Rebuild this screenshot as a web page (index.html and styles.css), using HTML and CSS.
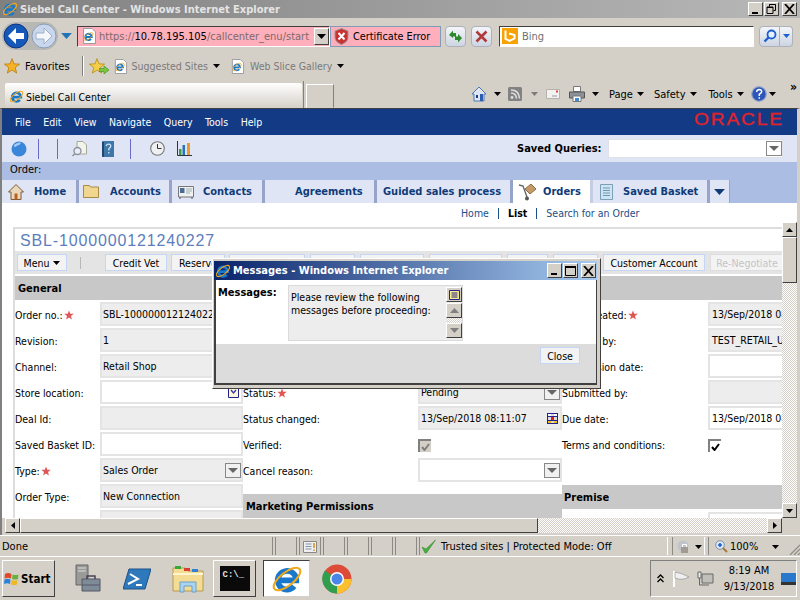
FILE: index.html
```html
<!DOCTYPE html>
<html lang="en">
<head>
    <meta charset="UTF-8">
    <title>Siebel Call Center - Windows Internet Explorer</title>
    <link rel="stylesheet" href="styles.css">
</head>
<body>
    <svg class="sprites" width="0" height="0">
        <symbol id="ie" viewBox="0 0 24 24">
            <path d="M5 13H19A7 7 0 1 0 17.4 17.4" fill="none" stroke="#1a78cc" stroke-width="4.2"/>
            <ellipse cx="12" cy="12" rx="12" ry="5" transform="rotate(-38 12 12)" fill="none" stroke="#f0a81c" stroke-width="1.6"/>
        </symbol>
        <symbol id="doc-ie" viewBox="0 0 16 16">
            <path d="M2.5.5H11L14.5 4V15.5H2.5Z" fill="#fff" stroke="#9a9a9a"/>
            <use href="#ie" x="2" y="3" width="11" height="11"/>
        </symbol>
        <symbol id="star" viewBox="0 0 12 12">
            <path d="M6 .5 7.5 4.4 11.7 4.6 8.4 7.2 9.5 11.3 6 9 2.5 11.3 3.6 7.2.3 4.6 4.5 4.4Z"/>
        </symbol>
        <symbol id="caret" viewBox="0 0 9 5">
            <path d="M0 0H9L4.5 5Z"/>
        </symbol>
    </svg>

    <header class="title-bar">
        <svg class="title-icon"><use href="#ie"/></svg>
        <span class="title-text">Siebel Call Center - Windows Internet Explorer</span>
        <div class="win-btns">
            <span class="win-btn"><svg width="11" height="9" viewBox="0 0 11 9"><path d="M2 7h6v2H2z"/></svg></span>
            <span class="win-btn"><svg width="11" height="10" viewBox="0 0 11 10"><path d="M3.5 2.5V.5h6v6h-2M1 3h6v6.5H1z" fill="none" stroke="#000"/><path d="M1 3h6v1H1zM3.5 0h6v1h-6z"/></svg></span>
            <span class="win-btn win-close"><svg width="11" height="10" viewBox="0 0 11 10"><path d="M1 0l9 10M10 0 1 10" stroke="#000" stroke-width="1.8"/></svg></span>
        </div>
    </header>

    <div class="nav-bar">
        <div class="orbs">
            <svg width="26" height="26" viewBox="0 0 26 26"><circle cx="13" cy="13" r="12" fill="#1558b8" stroke="#0b3480"/><path d="M13 5 5 13l8 8v-5h8v-6h-8z" fill="#fff"/></svg>
            <svg width="26" height="26" viewBox="0 0 26 26"><circle cx="13" cy="13" r="12" fill="#c9d7ec" stroke="#8c9cb5"/><path d="M13 5l8 8-8 8v-5H5v-6h8z" fill="#f4f7fb" stroke="#9fb0c8"/></svg>
        </div>
        <svg class="nav-drop" width="11" height="6"><use href="#caret" fill="#2273b8"/></svg>
        <div class="address">
            <svg class="addr-icon" width="16" height="16"><use href="#doc-ie"/></svg>
            <span class="addr-url">https://<b>10.78.195.105</b>/callcenter_enu/start</span>
            <span class="combo-btn"><svg width="9" height="5"><use href="#caret"/></svg></span>
        </div>
        <div class="cert-error">
            <svg width="15" height="17" viewBox="0 0 15 17"><path d="M7.5.5 14 3v6c0 4-3 6-6.500 7.500C4 15 1 13 1 9V3z" fill="#c73232" stroke="#999"/><path d="M4.5 5l6 6.5M10.5 5l-6 6.5" stroke="#fff" stroke-width="2"/></svg>
            <span>Certificate Error</span>
        </div>
        <span class="ie-btn ie-btn-refresh">
            <svg width="15" height="15" viewBox="0 0 15 15"><path d="M1 6 5 1.5V4h3v3.500H5V9zM14 9l-4 4.500V11H7V7.500h3V5z" fill="#2c8a2c"/></svg>
        </span>
        <span class="ie-btn">
            <svg width="13" height="13" viewBox="0 0 13 13"><path d="M1.5 1.5l10 10M11.5 1.5l-10 10" stroke="#b03a3a" stroke-width="2.6"/></svg>
        </span>
        <div class="search-box">
            <svg width="16" height="16" viewBox="0 0 16 16"><path d="M0 0h16v16H0z" fill="#f7a200"/><path d="M3.5 2.5v8.5l4 2 5-2.500V7L7 5.500" fill="none" stroke="#fff" stroke-width="2"/></svg>
            <span>Bing</span>
        </div>
        <span class="search-go">
            <svg width="14" height="14" viewBox="0 0 14 14"><circle cx="8.5" cy="5.5" r="4" fill="#e6f0ff" stroke="#1c5fd0" stroke-width="1.8"/><path d="M5.5 8.5 1.5 12.5" stroke="#1c5fd0" stroke-width="2.4"/></svg>
        </span>
        <span class="search-drop"><svg width="7" height="4"><use href="#caret" fill="#1c5fd0"/></svg></span>
    </div>

    <div class="fav-bar">
        <svg class="fav-star" width="16" height="16"><use href="#star" fill="#f5b324" stroke="#b97a10" stroke-width=".6"/></svg>
        <span class="fav-label">Favorites</span>
        <span class="fav-sep"></span>
        <span class="fav-add">
            <svg width="16" height="16"><use href="#star" fill="#f5cf4a" stroke="#b98a10" stroke-width=".6"/></svg>
            <svg class="fav-arrow" width="10" height="8" viewBox="0 0 10 8"><path d="M0 2.5h5V0l5 4-5 4V5.500H0z" fill="#7bc840" stroke="#3d8a20" stroke-width=".6"/></svg>
        </span>
        <svg class="fav-doc" width="15" height="15"><use href="#doc-ie"/></svg>
        <span class="fav-link">Suggested Sites</span>
        <svg class="fav-caret" width="7" height="4"><use href="#caret"/></svg>
        <svg class="fav-doc fav-doc-2" width="15" height="15"><use href="#doc-ie"/></svg>
        <span class="fav-link fav-link-2">Web Slice Gallery</span>
        <svg class="fav-caret" width="7" height="4"><use href="#caret"/></svg>
    </div>

    <div class="tab-bar">
        <div class="ie-tab">
            <svg width="15" height="15"><use href="#ie"/></svg>
            <span>Siebel Call Center</span>
        </div>
        <span class="tab-sep"></span>
        <span class="new-tab"></span>
        <div class="cmd-bar">
            <svg class="cmd-home" width="16" height="16" viewBox="0 0 16 16"><path d="M8 1 1 8h2v7h10V8h2z" fill="#dfe6f2" stroke="#4c78b8"/><path d="M5 9h2v3H5z" fill="#1c3c80"/><path d="M9 8h3v7H9z" fill="#2a5db0"/></svg>
            <svg class="cmd-caret" width="7" height="4"><use href="#caret"/></svg>
            <svg class="cmd-rss" width="14" height="14" viewBox="0 0 14 14"><path d="M0 1.5Q0 0 1.5 0h11Q14 0 14 1.5v11q0 1.5-1.5 1.5h-11Q0 14 0 12.5z" fill="#828282"/><circle cx="4" cy="10.5" r="1.4" fill="#ddd"/><path d="M3 6q5 0 5.5 5.5M3 3q8 0 8.500 8.500" fill="none" stroke="#ddd" stroke-width="1.6"/></svg>
            <svg class="cmd-caret cmd-off" width="7" height="4"><use href="#caret"/></svg>
            <svg class="cmd-mail" width="14" height="10" viewBox="0 0 14 10"><path d="M.5.5h13v9H.5z" fill="#f2f2f2" stroke="#b5b2aa"/><path d="M6 7h5" stroke="#999"/><path d="M10 1.5h2v2h-2z" fill="#e04040"/></svg>
            <svg class="cmd-print" width="16" height="16" viewBox="0 0 16 16"><path d="M4.5.5h7v5h-7z" fill="#fff" stroke="#777"/><path d="M.5 6h15v6H.5z" fill="#8b9198" stroke="#555"/><path d="M4 10h8v5.500H4z" fill="#fff" stroke="#777"/><path d="M6 12h4v3H6z" fill="#3d8ad6"/></svg>
            <svg class="cmd-caret" width="7" height="4"><use href="#caret"/></svg>
            <span class="cmd-label cmd-page">Page</span>
            <svg class="cmd-caret cmd-near" width="7" height="4"><use href="#caret"/></svg>
            <span class="cmd-label">Safety</span>
            <svg class="cmd-caret cmd-near" width="7" height="4"><use href="#caret"/></svg>
            <span class="cmd-label cmd-tools">Tools</span>
            <svg class="cmd-caret cmd-near" width="7" height="4"><use href="#caret"/></svg>
            <svg class="cmd-help" width="16" height="16" viewBox="0 0 16 16"><circle cx="8" cy="8" r="7.3" fill="#2b55b8" stroke="#9aa8c8" stroke-width="1.2"/><path d="M5.5 6Q6 3.5 8.2 3.5 11 3.8 10.6 6 10 7.500 8.300 8.300V10M8.300 11.300v1.500" fill="none" stroke="#fff" stroke-width="1.5"/></svg>
            <svg class="cmd-caret cmd-tight" width="7" height="4"><use href="#caret"/></svg>
            <span class="cmd-more">&raquo;</span>
        </div>
    </div>

    <main class="app">
        <nav class="app-menu">
            <span>File</span><span>Edit</span><span>View</span><span>Navigate</span><span>Query</span><span>Tools</span><span>Help</span>
            <span class="oracle">ORACLE</span>
        </nav>

        <div class="app-tools">
            <svg class="tool-globe" width="16" height="16" viewBox="0 0 16 16"><circle cx="8" cy="8" r="7.5" fill="#3a86d8"/><path d="M3 4q3-3 7-2.500-1 3-4 3-1 2-3 1z" fill="#a9d0f5"/></svg>
            <span class="tool-sep tool-sep-1"></span>
            <span class="tool-sep tool-sep-2"></span>
            <svg class="tool-find" width="15" height="16" viewBox="0 0 15 16"><path d="M5 .5h6l3.500 3.500v9H5z" fill="#f3f3ec" stroke="#a5a99a"/><circle cx="5.5" cy="10" r="3.5" fill="#e8eef5" stroke="#8a8f9a" stroke-width="1.3"/><path d="M3 12.5.5 15" stroke="#8a8f9a" stroke-width="1.5"/></svg>
            <svg class="tool-book" width="12" height="16" viewBox="0 0 12 16"><path d="M0 1q0-1 1-1h11v16H1q-1 0-1-1z" fill="#3f78a8"/><path d="M0 1h2v15H1q-1 0-1-1z" fill="#20486c"/><path d="M4 5Q5 3 7 3.200 9.500 3.800 8.500 6L6.800 8v1.500M6.800 11v1.500" fill="none" stroke="#cfe5f5" stroke-width="1.3"/></svg>
            <span class="tool-sep tool-sep-3"></span>
            <svg class="tool-clock" width="15" height="15" viewBox="0 0 15 15"><circle cx="7.5" cy="7.5" r="6.8" fill="#eef0f2" stroke="#777" stroke-width="1.1"/><path d="M7.5 3v4.500H11.500" fill="none" stroke="#333"/></svg>
            <svg class="tool-chart" width="15" height="15" viewBox="0 0 15 15"><path d="M2 8h2.500v6H2z" fill="#3aa03a"/><path d="M5.500 4H8v10H5.500z" fill="#2a70c0"/><path d="M10 2h3v12h-3z" fill="#e89a2c"/><path d="M.5 0v14.500H15" fill="none" stroke="#333"/></svg>
            <label class="saved-label">Saved Queries:</label>
            <span class="saved-select"><span class="drop-btn"></span></span>
        </div>

        <div class="app-order">Order:</div>

        <div class="app-tabs">
            <span class="tab tab-home">
                <svg width="16" height="16" viewBox="0 0 16 16"><path d="M8 .5 .5 8H3v7.500h10V8h2.500z" fill="#e8d8bc" stroke="#7c5a3a"/><path d="M6.500 9.500h3v6h-3z" fill="#c0601e"/></svg>
                Home
            </span>
            <span class="tab tab-accounts">
                <svg width="16" height="13" viewBox="0 0 16 13"><path d="M.5 2V.5h6l1 1.500h8v10.500H.5z" fill="#f0d68e" stroke="#a88a48"/></svg>
                Accounts
            </span>
            <span class="tab tab-contacts">
                <svg width="16" height="14" viewBox="0 0 16 14"><path d="M.5 1.500h15v10.500H.5z" fill="#eef2f2" stroke="#777"/><path d="M2 3h4.500v5H2z" fill="#4a6a90"/><path d="M8 4h6M8 6h6M8 8h4" stroke="#a0b0b0"/><path d="M1 13h2M13 13h2" stroke="#555"/></svg>
                Contacts
            </span>
            <span class="tab tab-agreements">Agreements</span>
            <span class="tab tab-guided">Guided sales process</span>
            <span class="tab tab-orders">
                <svg width="18" height="18" viewBox="0 0 18 18"><path d="M7 6l6-5 5 5-6 5z" fill="#c69a68" stroke="#8c6a44"/><path d="M1 2l4 1 4 11" fill="none" stroke="#666" stroke-width="1.4"/><circle cx="9" cy="15.5" r="2" fill="#555"/></svg>
                Orders
            </span>
            <span class="tab tab-basket">
                <svg width="13" height="16" viewBox="0 0 13 16"><path d="M.5.5h12v15H.5z" fill="#cfe4f0" stroke="#7aa0b8"/><path d="M3 4h7M3 6.500h7M3 9h7M3 11.500h7" stroke="#6a98b8"/></svg>
                Saved Basket
            </span>
            <span class="tab tab-more"><svg width="11" height="6"><use href="#caret" fill="#0f3b78"/></svg></span>
        </div>

        <div class="subnav">
            <a>Home</a><i></i><a class="subnav-on">List</a><i></i><a>Search for an Order</a>
        </div>

        <div class="frame">
            <div class="view">
                <section class="applet">
                    <h2 class="applet-title">SBL-1000000121240227</h2>
                    <div class="btn-bar">
                        <span class="btn btn-menu">Menu <svg width="7" height="4"><use href="#caret"/></svg></span>
                        <span class="btn-sep"></span>
                        <span class="btn btn-credit">Credit Vet</span>
                        <span class="btn btn-reserve">Reserve</span>
                        <span class="btn btn-b3"></span>
                        <span class="btn btn-b4"></span>
                        <span class="btn btn-b5"></span>
                        <span class="btn btn-b6"></span>
                        <span class="btn btn-b7"></span>
                        <span class="btn btn-b8"></span>
                        <span class="btn btn-customer">Customer Account</span>
                        <span class="btn btn-off">Re-Negotiate</span>
                    </div>
                    <h3 class="section-head section-general">General</h3>
                    <div class="form">
                        <div class="col col-1">
                            <div class="row"><label>Order no.:<svg class="req"><use href="#star"/></svg></label><span class="field ro">SBL-1000000121240227</span></div>
                            <div class="row"><label>Revision:</label><span class="field ro">1</span></div>
                            <div class="row"><label>Channel:</label><span class="field ro">Retail Shop</span></div>
                            <div class="row"><label>Store location:</label><span class="field"><svg class="pick" width="11" height="11" viewBox="0 0 11 11"><path d="M.5.5h10v10H.5z" fill="#fff8d8" stroke="#24248c"/><path d="M3 3l2.500 3L8 3" fill="none" stroke="#3a3ab0" stroke-width="1.4"/></svg></span></div>
                            <div class="row"><label>Deal Id:</label><span class="field ro"></span></div>
                            <div class="row"><label>Saved Basket ID:</label><span class="field"></span></div>
                            <div class="row"><label>Type:<svg class="req"><use href="#star"/></svg></label><span class="field ro">Sales Order<span class="drop-btn"></span></span></div>
                            <div class="row"><label>Order Type:</label><span class="field ro">New Connection</span></div>
                            <div class="row"><label></label><span class="field ro"></span></div>
                        </div>
                        <div class="col col-2">
                            <div class="row"></div>
                            <div class="row"></div>
                            <div class="row"></div>
                            <div class="row"><label>Status:<svg class="req"><use href="#star"/></svg></label><span class="field ro">Pending<span class="drop-btn"></span></span></div>
                            <div class="row"><label>Status changed:</label><span class="field ro">13/Sep/2018 08:11:07<svg class="pick" width="11" height="11" viewBox="0 0 11 11"><path d="M0 0h11v11H0z" fill="#24248c"/><path d="M1 1h3v2H1zM7 1h3v2H7z" fill="#fff"/><path d="M4 4h3v3H4z" fill="#e02020"/><path d="M1 8h3v2H1zM7 8h3v2H7z" fill="#f0c020"/><path d="M1 4h3v3H1zM7 4h3v3H7zM4 8h3v2H4zM4 1h3v2H4z" fill="#ddd"/></svg></span></div>
                            <div class="row"><label>Verified:</label><span class="check check-off"><svg width="9" height="8" viewBox="0 0 9 8"><path d="M1 4l2.500 3L8 1" fill="none" stroke="#808080" stroke-width="2"/></svg></span></div>
                            <div class="row"><label>Cancel reason:</label><span class="field"><span class="drop-btn"></span></span></div>
                            <h3 class="section-head section-marketing">Marketing Permissions</h3>
                        </div>
                        <div class="col col-3">
                            <div class="row"><label>Date created:<svg class="req"><use href="#star"/></svg></label><span class="field ro">13/Sep/2018 08:11:07</span></div>
                            <div class="row"><label>Created by:</label><span class="field ro">TEST_RETAIL_USER</span></div>
                            <div class="row"><label>Submission date:</label><span class="field"></span></div>
                            <div class="row"><label>Submitted by:</label><span class="field ro"></span></div>
                            <div class="row"><label>Due date:</label><span class="field">13/Sep/2018 08:11:07</span></div>
                            <div class="row"><label>Terms and conditions:</label><span class="check"><svg width="9" height="8" viewBox="0 0 9 8"><path d="M1 4l2.500 3L8 1" fill="none" stroke="#000" stroke-width="2"/></svg></span></div>
                            <div class="row"></div>
                            <h3 class="section-head section-premise">Premise</h3>
                            <div class="row"><label></label><span class="field"></span></div>
                        </div>
                    </div>
                </section>
            </div>
            <div class="vscroll">
                <span class="sb-btn"><svg width="7" height="4" class="flip"><use href="#caret"/></svg></span>
                <span class="sb-thumb"></span>
                <span class="sb-track"></span>
                <span class="sb-btn"><svg width="7" height="4"><use href="#caret"/></svg></span>
            </div>
            <div class="hscroll">
                <span class="sb-btn"><svg width="4" height="7" viewBox="0 0 4 7"><path d="M4 0V7L0 3.500Z"/></svg></span>
                <span class="sb-thumb sb-thumb-h"></span>
                <span class="sb-track"></span>
                <span class="sb-btn"><svg width="4" height="7" viewBox="0 0 4 7"><path d="M0 0V7L4 3.500Z"/></svg></span>
            </div>
        </div>

        <div class="dialog">
            <div class="dialog-title">
                <svg width="16" height="16"><use href="#ie"/></svg>
                <span>Messages - Windows Internet Explorer</span>
                <div class="win-btns">
                    <span class="win-btn"><svg width="11" height="9" viewBox="0 0 11 9"><path d="M2 7h6v2H2z"/></svg></span>
                    <span class="win-btn"><svg width="11" height="10" viewBox="0 0 11 10"><path d="M.5 1h10v8.500H.5z" fill="none" stroke="#000"/><path d="M0 0h11v2H0z"/></svg></span>
                    <span class="win-btn win-close"><svg width="11" height="10" viewBox="0 0 11 10"><path d="M1 0l9 10M10 0 1 10" stroke="#000" stroke-width="1.8"/></svg></span>
                </div>
            </div>
            <div class="dialog-body">
                <strong>Messages:</strong>
                <div class="msg-box">
                    <p>Please review the following messages before proceeding:</p>
                    <div class="msg-scroll">
                        <span class="msg-btn msg-menu"><svg width="11" height="10" viewBox="0 0 11 10"><path d="M.5.5h10v9H.5z" fill="#f7e98c" stroke="#24248c"/><path d="M2.500 3h6M2.500 5h6M2.500 7h6" stroke="#24248c"/></svg></span>
                        <span class="msg-btn"><svg width="9" height="5" class="flip"><use href="#caret" fill="#808080"/></svg></span>
                        <span class="msg-gap"></span>
                        <span class="msg-btn msg-down"><svg width="9" height="5"><use href="#caret" fill="#808080"/></svg></span>
                    </div>
                </div>
            </div>
            <div class="dialog-foot">
                <span class="btn btn-close">Close</span>
            </div>
        </div>
    </main>

    <footer class="status-bar">
        <span class="st st-done">Done</span>
        <span class="st st-s"></span>
        <span class="st st-note"><svg width="14" height="12" viewBox="0 0 14 12"><path d="M.5.5h13v11H.5z" fill="#f0f0f0" stroke="#888"/><path d="M2.500 3h6M2.500 5.500h6M2.500 8h6" stroke="#8090a8"/><path d="M11 2v5M11 8.500v1.500" stroke="#e08a10" stroke-width="1.5"/></svg></span>
        <span class="st st-s"></span>
        <span class="st st-s"></span>
        <span class="st st-s"></span>
        <span class="st st-s"></span>
        <span class="st st-zone"><svg width="15" height="15" viewBox="0 0 15 15"><path d="M1 8l3 6h1.500L14.500 1 5 10z" fill="#48b040" stroke="#2c8028" stroke-width=".5"/></svg>Trusted sites | Protected Mode: Off</span>
        <span class="st st-lock"><svg width="15" height="14" viewBox="0 0 15 14"><circle cx="8" cy="6" r="5.500" fill="#c0c4ca"/><path d="M6 7h7v6H6z" fill="#a09c92"/><path d="M7.500 7V4.500h4V7" fill="none" stroke="#fff"/></svg><svg width="7" height="4"><use href="#caret"/></svg></span>
        <span class="st st-zoom"><svg width="13" height="13" viewBox="0 0 13 13"><circle cx="5" cy="5" r="4.300" fill="#dce8f8" stroke="#8090a8"/><path d="M3 5h4M5 3v4" stroke="#1c5fd0" stroke-width="1.6"/><path d="M8 8l4 4" stroke="#a8783c" stroke-width="2"/></svg>100%<svg class="zoom-caret" width="7" height="4"><use href="#caret"/></svg><svg class="grip" width="11" height="11" viewBox="0 0 11 11"><path d="M11 1 1 11M11 5 5 11M11 9 9 11" stroke="#8c8a84" stroke-width="1.2"/></svg></span>
    </footer>

    <div class="taskbar">
        <span class="start">
            <svg width="16" height="14" viewBox="0 0 16 14"><path d="M1 2q3-2 6.500 0L7 6.500Q4 5 .5 6.500z" fill="#e0482c"/><path d="M8.500 2.500q3 1 6 0L14 7q-3 1-6 0z" fill="#6cb03c"/><path d="M.5 7.500q3-1.500 6 0L6 12q-3-1.500-6 0z" fill="#2c80d8"/><path d="M7.500 8q3 1 6 0L13 12.500q-3 1-6 0z" fill="#f0b820"/></svg>
            <b>Start</b>
        </span>
        <svg class="tb-server" width="28" height="30" viewBox="0 0 28 30"><path d="M2 1h12v20H2z" fill="#9a9a98" stroke="#666"/><path d="M4 4h8M4 7h8" stroke="#ddd"/><path d="M8 15h18v12H8z" fill="#7e8c98" stroke="#556"/><path d="M13 15v-3h8v3" fill="none" stroke="#445" stroke-width="1.5"/><path d="M8 21h18" stroke="#556"/></svg>
        <svg class="tb-ps" width="28" height="24" viewBox="0 0 28 24"><path d="M6 2h22l-6 20H0z" fill="#2e78bc" stroke="#1a5288"/><path d="M7 7l8 5-10 5M13 18h6" fill="none" stroke="#fff" stroke-width="2"/></svg>
        <svg class="tb-folder" width="32" height="30" viewBox="0 0 32 30"><path d="M1 4h12l3 3h15v20H1z" fill="#f4dc94" stroke="#b89a50"/><path d="M3 2h6v3H3z" fill="#3aa83a"/><path d="M12 4h6v3h-6z" fill="#d84030"/><path d="M20 5h6v3h-6z" fill="#3080d8"/><path d="M1 10h30" stroke="#fff6d0" stroke-width="2"/><path d="M8 28V18h16v10h-4v-6h-8v6z" fill="#a8d4f0" stroke="#6aa0c8"/></svg>
        <span class="tb-cmd"><span class="cmd-screen">C:\_</span></span>
        <span class="tb-ie"><svg width="32" height="32"><use href="#ie"/></svg></span>
        <svg class="tb-chrome" width="30" height="30" viewBox="0 0 30 30"><circle cx="15" cy="15" r="14.5" fill="#dd4b39"/><path d="M15 15 2.500 22.300A14.500 14.500 0 0 0 15 29.500z" fill="#2e9e4f"/><path d="M2.500 22.300A14.500 14.500 0 0 1 3 6.500L15 15z" fill="#2e9e4f"/><path d="M15 15h14.500A14.500 14.500 0 0 1 15 29.500z" fill="#fbc02d"/><circle cx="15" cy="15" r="7" fill="#fff"/><circle cx="15" cy="15" r="5.5" fill="#4a86e8"/></svg>
        <div class="tray">
            <svg class="tray-up" width="7" height="9" viewBox="0 0 7 9"><path d="M.5 4l3-3 3 3M.5 8l3-3 3 3" fill="none" stroke="#000" stroke-width="1.3"/></svg>
            <svg class="tray-flag" width="17" height="16" viewBox="0 0 17 16"><path d="M1 0v16" stroke="#fff" stroke-width="2"/><path d="M2 1q7 1 14 5-7 4-14 1z" fill="#efefef" stroke="#888" stroke-width=".6"/></svg>
            <svg class="tray-net" width="17" height="16" viewBox="0 0 17 16"><path d="M5 3h11v9H5z" fill="#c0bfb8" stroke="#666"/><path d="M1 1h3v6H1z" fill="#eee" stroke="#666"/><path d="M2.500 7v7H12" fill="none" stroke="#666"/></svg>
            <span class="clock">8:19 AM<br>9/13/2018</span>
            <svg class="tray-desk" width="15" height="12" viewBox="0 0 15 12"><path d="M0 0h15v12H0z" fill="#2a78cc"/><path d="M0 9h15v3H0z" fill="#333"/></svg>
        </div>
    </div>
</body>
</html>
```

FILE: styles.css
```css
* {
    box-sizing: border-box;
}

html, body {
    margin: 0;
    width: 800px;
    height: 600px;
    overflow: hidden;
}

body {
    display: flex;
    flex-direction: column;
    background-color: #d4d0c8;
    color: #000;
    font-family: "DejaVu Sans", sans-serif;
    font-stretch: condensed;
    font-size: 10.5px;
}

svg {
    flex: none;
    display: block;
}

.sprites {
    position: absolute;
}

.flip {
    transform: rotate(180deg);
}

/* window title */
.title-bar {
    height: 18px;
    display: flex;
    align-items: center;
    padding: 0 3px 0 2px;
    background: linear-gradient(to right, #808080, #b8b8b8);
}

.title-icon {
    width: 16px;
    height: 16px;
}

.title-text {
    margin-left: 2px;
    color: #e4e4e4;
    font-size: 11px;
    font-weight: bold;
}

.win-btns {
    margin-left: auto;
    display: flex;
}

.win-btn {
    width: 15px;
    height: 14px;
    margin-left: 1px;
    display: flex;
    align-items: center;
    justify-content: center;
    background-color: #d4d0c8;
    border: 1px solid;
    border-color: #fff #404040 #404040 #fff;
}

.win-close {
    margin-left: 3px;
}

/* address row */
.nav-bar {
    height: 36px;
    display: flex;
    align-items: center;
    padding-left: 2px;
}

.orbs {
    width: 56px;
    height: 28px;
    display: flex;
    align-items: center;
    padding-left: 1px;
    gap: 2px;
    background-color: #b8b8b4;
    border-radius: 14px;
}

.nav-drop {
    margin-left: 3px;
}

.address {
    width: 253px;
    height: 21px;
    margin-left: 5px;
    display: flex;
    align-items: center;
    padding-left: 3px;
    background-color: #ffafbc;
    border: 1px solid;
    border-color: #404040 #fff #fff #404040;
}

.addr-url {
    margin-left: 2px;
    color: #7c6a6a;
    font-size: 11px;
    white-space: nowrap;
}

.addr-url b {
    color: #000;
    font-weight: normal;
}

.combo-btn {
    width: 15px;
    height: 17px;
    margin-left: auto;
    display: flex;
    align-items: center;
    justify-content: center;
    background-color: #d4d0c8;
    border: 1px solid;
    border-color: #fff #404040 #404040 #fff;
}

.cert-error {
    width: 111px;
    height: 21px;
    display: flex;
    align-items: center;
    gap: 4px;
    padding-left: 3px;
    background-color: #ffafbc;
    border: 1px solid #7f9db9;
    font-size: 10.8px;
}

.ie-btn {
    width: 21px;
    height: 21px;
    margin-left: 5px;
    display: flex;
    align-items: center;
    justify-content: center;
    background: linear-gradient(#f3f5f9, #cdd5e2);
    border: 1px solid #aeb2b8;
    border-radius: 4px;
}

.ie-btn-refresh {
    margin-left: 4px;
}

.search-box {
    width: 255px;
    height: 21px;
    margin-left: 7px;
    display: flex;
    align-items: center;
    gap: 4px;
    padding-left: 2px;
    background-color: #fff;
    border: 1px solid;
    border-color: #404040 #fff #fff #404040;
    color: #707070;
    font-size: 11px;
}

.search-go {
    width: 21px;
    height: 21px;
    margin-left: 5px;
    display: flex;
    align-items: center;
    justify-content: center;
    background: linear-gradient(#f3f5f9, #cdd5e2);
    border: 1px solid #aeb2b8;
    border-radius: 4px 0 0 4px;
}

.search-drop {
    width: 13px;
    height: 21px;
    display: flex;
    align-items: center;
    justify-content: center;
    background: linear-gradient(#f3f5f9, #cdd5e2);
    border: 1px solid #aeb2b8;
    border-left: none;
    border-radius: 0 4px 4px 0;
}

/* favorites row */
.fav-bar {
    height: 26px;
    display: flex;
    align-items: center;
    padding: 0 0 2px 4px;
    font-size: 11px;
}

.fav-label {
    margin-left: 5px;
}

.fav-sep {
    width: 2px;
    height: 20px;
    margin-left: 12px;
    border-left: 1px solid #808080;
    border-right: 1px solid #fff;
}

.fav-add {
    width: 18px;
    height: 16px;
    margin-left: 5px;
    position: relative;
}

.fav-arrow {
    position: absolute;
    right: -2px;
    bottom: 0;
}

.fav-doc {
    margin-left: 6px;
}

.fav-doc-2 {
    margin-left: 10px;
}

.fav-link {
    margin-left: 4px;
    color: #7a7a7a;
    font-size: 10.5px;
}

.fav-link-2 {
    margin-left: 5px;
}

.fav-caret {
    margin-left: 5px;
}

/* tab row */
.tab-bar {
    height: 28px;
    display: flex;
    align-items: flex-end;
    padding-left: 5px;
    font-size: 11px;
}

.ie-tab {
    width: 297px;
    height: 25px;
    display: flex;
    align-items: center;
    gap: 2px;
    padding: 2px 0 0 4px;
    background: linear-gradient(#fff, #d4d0c8);
    border-radius: 2px 2px 0 0;
    font-size: 10.5px;
}

.tab-sep {
    width: 1px;
    height: 27px;
    margin-left: 1px;
    background-color: #808080;
}

.new-tab {
    width: 28px;
    height: 24px;
    margin-left: 2px;
    border: 1px solid;
    border-color: #fff #808080 #d4d0c8 #fff;
}

.cmd-bar {
    flex: 1;
    height: 28px;
    display: flex;
    align-items: center;
    padding-left: 137px;
    position: relative;
}

.cmd-caret {
    margin-left: 7px;
}

.cmd-off {
    opacity: 0.4;
    margin-left: 9px;
}

.cmd-near {
    margin-left: 4px;
}

.cmd-rss {
    margin-left: 7px;
}

.cmd-mail {
    margin-left: 8px;
}

.cmd-print {
    margin-left: 9px;
}

.cmd-label {
    margin-left: 10px;
    font-size: 11px;
}

.cmd-tools {
    margin-left: 12px;
}

.cmd-help {
    margin-left: 7px;
}

.cmd-tight {
    margin-left: 2px;
}

.cmd-more {
    position: absolute;
    right: 3px;
    top: 0;
    font-size: 12px;
    font-weight: bold;
}

/* siebel app */
.app {
    height: 427px;
    flex: none;
    display: flex;
    flex-direction: column;
    position: relative;
    border-top: 1px solid #404040;
    border-left: 2px solid #808080;
    border-right: 3px solid #d4d0c8;
    background-color: #fff;
}

.app-menu {
    height: 26px;
    flex: none;
    display: flex;
    align-items: center;
    padding-left: 13px;
    padding-right: 14px;
    background-color: #133a85;
    color: #fff;
    font-size: 10.5px;
}

.app-menu span {
    margin-right: 12.5px;
}

.app-menu .oracle {
    margin: 0 -1px 5px auto;
    color: #e0232b;
    font-family: "Liberation Sans", sans-serif;
    font-size: 16px;
    letter-spacing: 1.5px;
    -webkit-text-stroke: 0.3px #e0232b;
    transform: scaleX(1.2);
    transform-origin: right center;
}

.app-tools {
    height: 27px;
    flex: none;
    display: flex;
    align-items: center;
    padding-left: 9px;
    background-color: #dfe5f5;
}

.tool-sep {
    width: 2px;
    height: 20px;
    margin-left: 10px;
    border-right: 1px solid #6a6ac8;
    background: linear-gradient(to right, #fff 50%, transparent 50%);
}

.tool-sep-2 {
    margin-left: 17px;
}

.tool-find {
    margin-left: 14px;
}

.tool-book {
    margin-left: 15px;
}

.tool-sep-3 {
    margin-left: 15px;
}

.tool-clock {
    margin-left: 19px;
}

.tool-chart {
    margin-left: 12px;
}

.saved-label {
    margin-left: 325px;
    font-size: 11px;
    font-weight: bold;
}

.saved-select {
    width: 175px;
    height: 19px;
    margin-left: 6px;
    position: relative;
    background-color: #fff;
    border: 1px solid #e0e0e8;
}

.drop-btn {
    width: 16px;
    height: 15px;
    position: absolute;
    right: 0;
    top: 1px;
    background-color: #fff;
    border: 1px solid #888;
}

.drop-btn::after {
    content: "";
    position: absolute;
    left: 2px;
    top: 4px;
    border-style: solid;
    border-width: 5px 5px 0;
    border-color: #666 transparent transparent;
}

.app-order {
    height: 18px;
    flex: none;
    padding: 1px 0 0 8px;
    background-color: #abbde3;
    font-size: 11px;
}

.app-tabs {
    height: 23px;
    flex: none;
    display: flex;
    background-color: #abbde3;
    color: #0f3b78;
    font-size: 11px;
    font-weight: bold;
}

.tab {
    height: 23px;
    display: flex;
    align-items: center;
    background-color: #dfe5f5;
    border-right: 3px solid #97a4c9;
    white-space: nowrap;
}

.tab svg {
    margin-right: 10px;
}

.tab-home {
    width: 77px;
    padding-left: 6px;
}

.tab-accounts {
    width: 93px;
    padding-left: 4px;
}

.tab-accounts svg {
    margin: 0 11px 0 0;
}

.tab-contacts {
    width: 93px;
    padding-left: 6px;
}

.tab-contacts svg {
    margin-right: 9px;
}

.tab-agreements {
    width: 112px;
    padding-left: 30px;
}

.tab-guided {
    width: 136px;
    padding-left: 6px;
}

.tab-orders {
    width: 80px;
    padding-left: 5px;
    background-color: #fff;
    border-right-color: #c4cde4;
}

.tab-orders svg {
    margin-right: 7px;
}

.tab-basket {
    width: 117px;
    padding-left: 7px;
}

.tab-basket svg {
    margin-right: 10px;
}

.tab-more {
    width: 20px;
    padding-left: 4px;
    border-right-width: 1px;
}

.tab-more svg {
    margin: 0;
}

.subnav {
    height: 19px;
    flex: none;
    display: flex;
    align-items: center;
    padding: 1px 0 0 459px;
    color: #1b4f87;
    font-size: 10.5px;
}

.subnav i {
    width: 1px;
    height: 11px;
    margin: 0 9px;
    background-color: #1b4f87;
}

.subnav-on {
    color: #000;
    font-weight: bold;
}

.frame {
    flex: 1;
    min-height: 0;
    display: grid;
    grid-template-columns: 780px 15px;
    grid-template-rows: 296px 15px;
    background-color: #d4d0c8;
}

.view {
    overflow: hidden;
    padding: 5px 0 0 11px;
    background-color: #fff;
}

.applet {
    width: 900px;
    border-top: 2px solid #ddd;
    border-left: 2px solid #ddd;
}

.applet-title {
    height: 22px;
    margin: 0;
    padding: 3px 0 0 5px;
    color: #5c7ebd;
    font-family: "Liberation Sans", sans-serif;
    font-size: 16px;
    font-weight: normal;
    letter-spacing: 0.85px;
}

.btn-bar {
    height: 23px;
    display: flex;
    align-items: center;
    padding-left: 2px;
    background-color: #e4e4e4;
}

.btn {
    height: 17px;
    display: flex;
    align-items: center;
    justify-content: center;
    gap: 4px;
    margin-right: 5px;
    background-color: #f3f3f3;
    border: 1px solid #c4d5f5;
    font-size: 10.5px;
}

.btn-menu {
    width: 50px;
}

.btn-sep {
    width: 1px;
    height: 12px;
    margin: 0 24px 0 8px;
    background-color: #b8b8b8;
}

.btn-credit {
    width: 62px;
    margin-right: 4px;
}

.btn-reserve {
    width: 54px;
    margin-right: 4px;
}

.btn-b3 {
    width: 76px;
}

.btn-b4 {
    width: 45px;
}

.btn-b5 {
    width: 64px;
}

.btn-b6 {
    width: 73px;
}

.btn-b7 {
    width: 41px;
}

.btn-b8 {
    width: 45px;
}

.btn-customer {
    width: 102px;
}

.btn-off {
    width: 74px;
    border-color: #dedede;
    color: #c4c4c8;
}

.section-head {
    height: 24px;
    margin: 0;
    display: flex;
    align-items: center;
    padding-left: 3px;
    background-color: #c8c8c8;
    font-size: 11px;
    font-weight: bold;
}

.section-general {
    margin-top: 2px;
    margin-bottom: 2px;
}

.form {
    display: flex;
}

.col {
    flex: none;
}

.row {
    height: 26px;
    display: flex;
    align-items: flex-start;
}

.row label {
    flex: none;
    display: flex;
    align-items: center;
    height: 26px;
    white-space: nowrap;
}

.req {
    width: 10px;
    height: 10px;
    margin-left: 1px;
    fill: #e05555;
}

.field {
    height: 24px;
    display: flex;
    align-items: center;
    padding-left: 1px;
    position: relative;
    overflow: hidden;
    white-space: nowrap;
    background-color: #fff;
    border: 2px solid #e4e4e4;
}

.ro {
    background-color: #ededed;
}

.field .drop-btn {
    top: 3px;
    background-color: #f0f0f0;
}

.pick {
    position: absolute;
    right: 2px;
    top: 5px;
}

.col-1 {
    width: 228px;
}

.col-1 label {
    width: 85px;
}

.col-1 .field {
    width: 144px;
}

.col-2 {
    width: 319px;
}

.col-2 label {
    width: 175px;
}

.col-2 .field {
    width: 145px;
}

.col-3 label {
    width: 146px;
}

.col-3 .field {
    width: 146px;
    padding-left: 2px;
}

.check {
    width: 13px;
    height: 13px;
    margin-top: 7px;
    display: flex;
    align-items: center;
    justify-content: center;
    background-color: #fff;
    border-top: 2px solid #808080;
    border-left: 2px solid #808080;
}

.check-off {
    background-color: #d4d0c8;
}

.section-marketing {
    margin-top: 10px;
}

.section-premise {
    margin-top: 1px;
    margin-bottom: 3px;
    padding-left: 2px;
}

.vscroll, .hscroll {
    display: flex;
}

.vscroll {
    flex-direction: column;
}

.hscroll {
    margin: 0 0 0 3px;
}

.sb-btn {
    width: 15px;
    height: 15px;
    flex: none;
    display: flex;
    align-items: center;
    justify-content: center;
    background-color: #d4d0c8;
    border: 1px solid;
    border-color: #fff #404040 #404040 #fff;
}

.sb-thumb {
    height: 46px;
    flex: none;
    background-color: #d4d0c8;
    border: 1px solid;
    border-color: #fff #404040 #404040 #fff;
}

.sb-thumb-h {
    width: 518px;
    height: 15px;
}

.sb-track {
    flex: 1;
    background: repeating-conic-gradient(#d4d0c8 0 25%, #fff 0 50%) 0 0 / 2px 2px;
}

/* message dialog */
.dialog {
    width: 389px;
    height: 131px;
    position: absolute;
    left: 210px;
    top: 149px;
    display: flex;
    flex-direction: column;
    padding: 2px 3px 3px 1px;
    background-color: #d4d0c8;
    border: 1px solid;
    border-color: #fff #404040 #404040 #fff;
}

.dialog-title {
    height: 19px;
    flex: none;
    display: flex;
    align-items: center;
    gap: 2px;
    padding: 0 1px;
    background: linear-gradient(to right, #0a246a, #a6caf0);
    color: #fff;
    font-size: 11px;
    font-weight: bold;
}

.dialog-title .win-btn {
    height: 15px;
}

.dialog-body {
    height: 64px;
    flex: none;
    display: flex;
    padding: 5px 0 0 2px;
    background-color: #fff;
    border-left: 2px solid #404040;
    border-right: 1px solid #404040;
}

.dialog-body strong {
    width: 70px;
    margin-top: 1px;
    font-size: 11px;
}

.msg-box {
    width: 175px;
    height: 56px;
    display: flex;
    background-color: #ededed;
    border: 1px solid #dadada;
}

.msg-box p {
    width: 155px;
    margin: 5px 0 0 2px;
    line-height: 13px;
}

.msg-scroll {
    width: 16px;
    margin-top: 1px;
    display: flex;
    flex-direction: column;
}

.msg-btn {
    height: 15px;
    flex: none;
    display: flex;
    align-items: center;
    justify-content: center;
    background-color: #d4d0c8;
    border: 1px solid;
    border-color: #fff #404040 #404040 #fff;
}

.msg-menu {
    margin-bottom: 1px;
}

.msg-gap {
    height: 5px;
    background: repeating-conic-gradient(#d4d0c8 0 25%, #fff 0 50%) 0 0 / 2px 2px;
}

.dialog-foot {
    flex: 1;
    display: flex;
    justify-content: flex-end;
    padding: 3px 16px 0 0;
    background-color: #dcdcdc;
    border-left: 2px solid #404040;
    border-right: 1px solid #404040;
    border-bottom: 2px solid #404040;
}

.btn-close {
    width: 40px;
    margin: 0;
}

/* status bar */
.status-bar {
    height: 22px;
    flex: none;
    display: flex;
    padding: 1px 0 0 2px;
    border-top: 1px solid #fff;
    border-bottom: 1px solid #fff;
    font-size: 11px;
}

.st {
    display: flex;
    align-items: center;
    height: 18px;
    padding-top: 1px;
    margin-right: 2px;
    border-left: 1px solid #8c8a84;
    border-right: 1px solid #fff;
}

.st-done {
    width: 271px;
    border-left: none;
    border-right: 1px solid #8c8a84;
}

.st-s, .st-note {
    width: 22px;
    border-right: 1px solid #8c8a84;
    border-left: 1px solid #8c8a84;
}

.st-note {
    padding-left: 3px;
}

.st-zone {
    width: 249px;
    gap: 5px;
    padding-left: 1px;
    margin-right: 4px;
}

.st-lock {
    width: 33px;
    gap: 5px;
    padding-left: 2px;
    margin-right: 3px;
}

.st-zoom {
    flex: 1;
    gap: 2px;
    padding-left: 6px;
    margin-right: 0;
    border-right: none;
}

.zoom-caret {
    margin-left: 12px;
}

.grip {
    margin-left: auto;
    align-self: flex-end;
}

/* taskbar */
.taskbar {
    flex: 1;
    display: flex;
    align-items: center;
    padding-left: 2px;
}

.start {
    width: 53px;
    height: 37px;
    display: flex;
    align-items: center;
    gap: 1px;
    padding-left: 1px;
    background-color: #d4d0c8;
    border: 1px solid;
    border-color: #fff #404040 #404040 #fff;
    font-size: 11.5px;
}

.tb-server {
    margin-left: 19px;
}

.tb-ps {
    margin-left: 21px;
}

.tb-folder {
    margin-left: 21px;
}

.tb-cmd {
    width: 43px;
    height: 37px;
    margin-left: 9px;
    display: flex;
    align-items: center;
    justify-content: center;
    border: 1px solid;
    border-color: #fff #404040 #404040 #fff;
}

.cmd-screen {
    width: 30px;
    height: 25px;
    padding: 4px 0 0 3px;
    background-color: #0a0a0a;
    color: #e0e0e0;
    font-size: 9px;
    font-family: "Liberation Mono", monospace;
    font-weight: bold;
}

.tb-ie {
    width: 47px;
    height: 37px;
    margin-left: 7px;
    display: flex;
    align-items: center;
    justify-content: center;
    background-color: #fff;
    border: 1px solid;
    border-color: #404040 #d4d0c8 #d4d0c8 #404040;
}

.tb-chrome {
    margin-left: 12px;
}

.tray {
    width: 147px;
    height: 37px;
    margin-left: auto;
    margin-right: 3px;
    display: flex;
    align-items: center;
    padding-left: 6px;
    border: 1px solid;
    border-color: #808080 #fff #fff #808080;
}

.tray-flag {
    margin-left: 9px;
}

.tray-net {
    margin-left: 7px;
}

.clock {
    width: 62px;
    margin-left: 4px;
    text-align: center;
    font-size: 11px;
    line-height: 16px;
}

.tray-desk {
    margin-left: 1px;
}
```
